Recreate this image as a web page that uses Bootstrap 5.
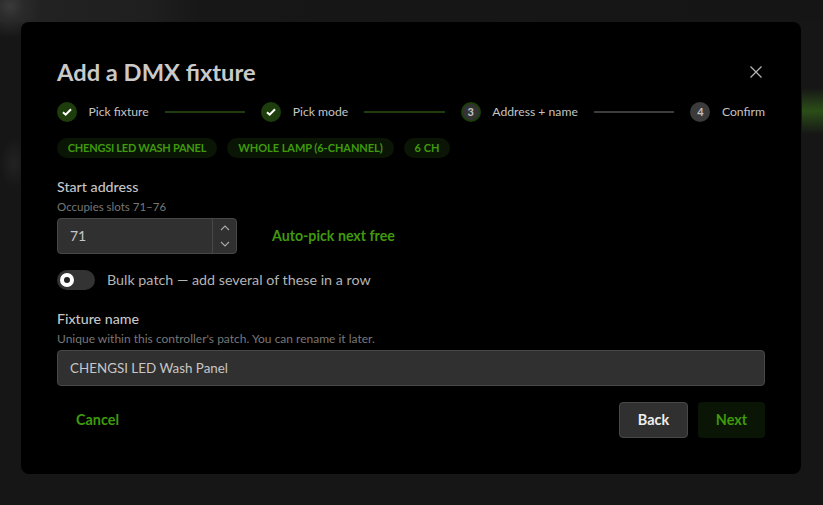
<!DOCTYPE html>
<html lang="en">
<head>
<meta charset="utf-8">
<title>Add a DMX fixture</title>
<link href="https://cdn.jsdelivr.net/npm/bootstrap@5.3.0/dist/css/bootstrap.min.css" rel="stylesheet">
<style>
html,body{height:100%;}
body{margin:0;overflow:hidden;font-family:"Lato","Noto Sans",sans-serif;color:#ccc;
 background-color:#161616;
 background-image:
  radial-gradient(circle at 10px 6px,#3a3a3a 0,#2a2a2a 14px,rgba(30,30,30,0) 32px),
  radial-gradient(ellipse 14px 26px at 14px 163px,#222 0,rgba(30,30,30,0) 100%),
  linear-gradient(180deg,rgba(36,63,20,0) 88px,#2b4e18 111px,rgba(36,63,20,0) 134px),
  linear-gradient(90deg,#232323 0,#1f1f1f 150px,#171717 200px,#151515 100%);
 background-repeat:no-repeat;
 background-position:0 0,0 0,100% 0,0 0;
 background-size:100% 100%,100% 100%,21px 100%,100% 22px;}
.shade{padding:22px 22px 31px 21px;height:505px;}
.sheet{background:#000;border:0;border-radius:8px;height:452px;padding:35px 36px 36px;color:#ccc;}
.ttl{font-size:23.7px;font-weight:700;line-height:30px;margin:0;color:#c9c9c9;}
.shut{background:none;border:0;padding:0;width:16px;height:16px;line-height:0;margin-right:1px;}
.stepper{margin-top:15px;height:20px;gap:16px;}
.stp{gap:11.5px;font-size:12.2px;line-height:20px;color:#c4c4c4;}
.dot{width:20px;height:20px;border-radius:50%;flex:none;font-size:11px;font-weight:700;color:#c4c4c4;background:#3b3b3b;}
.dot.done{background:#1d3d0c;}
.dot.now{background:#333;border:2px solid #1d3d0c;}
.rule{flex:1 1 0;height:2px;background:#3c3c3c;}
.rule.done{background:#1d3d0c;}
.tags{margin-top:16px;gap:10px;}
.tag{background:#0a1505;color:#3f9a0b;font-size:11px;font-weight:700;line-height:20px;height:20px;border-radius:10px;white-space:nowrap;text-align:center;}
.tag-a{width:160px;letter-spacing:-.25px;}
.tag-b{width:167px;letter-spacing:-.05px;}
.tag-c{width:46px;}
.addr-block{margin-top:20px;}
.name-block{margin-top:20px;}
.lbl{font-size:14.2px;font-weight:500;line-height:18px;color:#c6c6c6;margin:0;}
.hnt{font-size:12px;line-height:14px;color:#777;margin-top:4px;margin-bottom:4px;}
.hnt.tight{font-size:11.5px;}
.fld{background:#303030;border:1px solid #484848;border-radius:4px;color:#c6c6c6;font-size:14px;height:36px;padding:0 12px;font-family:inherit;}
.fld.compact{font-size:13.4px;}
.fld.num{padding-bottom:2px;}
.fld:focus{background:#303030;color:#c6c6c6;border-color:#484848;box-shadow:none;}
.numbox{width:180px;height:36px;position:relative;}
.numbox .fld{width:100%;}
.spin{position:absolute;right:0;top:0;width:25px;height:36px;border-left:1px solid #484848;padding:7px 0;}
.auto{color:#3f9a0b;font-size:14.2px;font-weight:700;background:none;border:0;padding:0;margin-left:35px;}
.toggle{width:38px;height:20px;border-radius:10px;background:#333;flex:none;padding:3px 0 0 3px;}
.knob{display:block;width:14px;height:14px;border-radius:50%;border:4px solid #fff;background:#222;}
.bulk{gap:12px;margin-top:16px;height:20px;font-size:14.3px;color:#b4b4b4;}
.foot{margin-top:16px;}
.act{height:36px;font-size:14.4px;font-weight:700;border-radius:4px;padding:0;}
.act-c{color:#3f9a0b;background:none;border:0;margin-left:19px;}
.act-b{width:69px;background:#303030;border:1px solid #484848;color:#eee;}
.act-n{width:67px;background:#0a1505;border:0;color:#3f9a0b;}
.act-row{gap:10px;}
</style>
</head>
<body>
<div class="shade">
 <div class="sheet card">
  <div class="d-flex justify-content-between align-items-center">
   <h1 class="ttl">Add a DMX fixture</h1>
   <button class="shut" aria-label="Close"><svg width="16" height="16" viewBox="0 0 16 16"><path d="M2.5 2.5l11 11M13.500 2.500l-11 11" stroke="#b8b8b8" stroke-width="1.200" fill="none"/></svg></button>
  </div>
  <div class="stepper d-flex align-items-center">
   <div class="stp d-flex align-items-center"><span class="dot done d-flex align-items-center justify-content-center"><svg width="12" height="12" viewBox="0 0 12 12"><path d="M2 6.200l2.700 2.500 5.300-5.500" stroke="#fff" stroke-width="2" fill="none"/></svg></span><span>Pick fixture</span></div>
   <div class="rule done"></div>
   <div class="stp d-flex align-items-center"><span class="dot done d-flex align-items-center justify-content-center"><svg width="12" height="12" viewBox="0 0 12 12"><path d="M2 6.200l2.700 2.500 5.300-5.500" stroke="#fff" stroke-width="2" fill="none"/></svg></span><span>Pick mode</span></div>
   <div class="rule done"></div>
   <div class="stp d-flex align-items-center"><span class="dot now d-flex align-items-center justify-content-center">3</span><span>Address + name</span></div>
   <div class="rule"></div>
   <div class="stp d-flex align-items-center"><span class="dot d-flex align-items-center justify-content-center">4</span><span>Confirm</span></div>
  </div>
  <div class="tags d-flex">
   <span class="tag tag-a">CHENGSI LED WASH PANEL</span>
   <span class="tag tag-b">WHOLE LAMP (6-CHANNEL)</span>
   <span class="tag tag-c">6 CH</span>
  </div>
  <div class="addr-block">
   <label class="lbl d-block" for="addr">Start address</label>
   <div class="hnt tight">Occupies slots 71–76</div>
   <div class="d-flex align-items-center">
    <div class="numbox">
     <input id="addr" class="fld num form-control" value="71">
     <div class="spin d-flex flex-column justify-content-between align-items-center">
      <svg width="10" height="6" viewBox="0 0 10 6"><path d="M1 5l4-4 4 4" stroke="#aaa" stroke-width="1.100" fill="none"/></svg>
      <svg width="10" height="6" viewBox="0 0 10 6"><path d="M1 1l4 4 4-4" stroke="#aaa" stroke-width="1.100" fill="none"/></svg>
     </div>
    </div>
    <button class="auto">Auto-pick next free</button>
   </div>
  </div>
  <div class="bulk d-flex align-items-center">
   <span class="toggle"><span class="knob"></span></span>
   <span>Bulk patch — add several of these in a row</span>
  </div>
  <div class="name-block">
   <label class="lbl d-block" for="fname">Fixture name</label>
   <div class="hnt">Unique within this controller's patch. You can rename it later.</div>
   <input id="fname" class="fld compact form-control" value="CHENGSI LED Wash Panel">
  </div>
  <div class="foot d-flex align-items-center">
   <button class="act act-c btn">Cancel</button>
   <div class="ms-auto d-flex act-row">
    <button class="act act-b btn">Back</button>
    <button class="act act-n btn">Next</button>
   </div>
  </div>
 </div>
</div>
</body>
</html>
